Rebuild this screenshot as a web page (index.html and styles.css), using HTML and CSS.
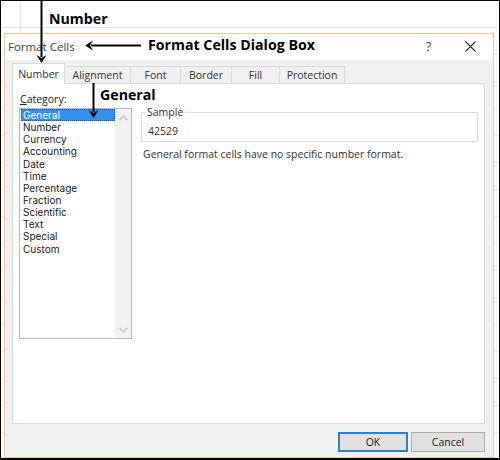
FILE: index.html
```html
<!DOCTYPE html>
<html>
<head>
<meta charset="utf-8">
<link rel="stylesheet" href="styles.css">
</head>
<body>
<div class="frame">
  <div class="dialog">
    <div class="titlebar">
      <span class="title">Format Cells</span>
      <span class="help">?</span>
      <span class="close">
        <svg width="11" height="11" viewBox="0 0 11 11"><path d="M0.5 0.5 L10.5 10.5 M10.5 0.5 L0.5 10.5" stroke="#333" stroke-width="1.1" fill="none"/></svg>
      </span>
    </div>
    <div class="body">
      <div class="tabs">
        <div class="tab active">Number</div>
        <div class="tab t-align">Alignment</div>
        <div class="tab t-font">Font</div>
        <div class="tab t-border">Border</div>
        <div class="tab t-fill">Fill</div>
        <div class="tab t-prot">Protection</div>
      </div>
      <div class="panel">
        <div class="cat-col">
          <div class="cat-label"><u>C</u>ategory:</div>
          <div class="listbox">
            <ul class="items">
              <li class="sel">General</li>
              <li>Number</li>
              <li>Currency</li>
              <li>Accounting</li>
              <li>Date</li>
              <li>Time</li>
              <li>Percentage</li>
              <li>Fraction</li>
              <li>Scientific</li>
              <li>Text</li>
              <li>Special</li>
              <li>Custom</li>
            </ul>
            <div class="scrollbar">
              <svg width="9" height="6" viewBox="0 0 9 6"><path d="M0.5 5 L4.5 1 L8.5 5" stroke="#c2c2c2" stroke-width="1.2" fill="none"/></svg>
              <svg width="9" height="6" viewBox="0 0 9 6"><path d="M0.5 1 L4.5 5 L8.5 1" stroke="#c2c2c2" stroke-width="1.2" fill="none"/></svg>
            </div>
          </div>
        </div>
        <div class="right-col">
          <fieldset class="sample">
            <legend>Sample</legend>
            <div class="sample-val">42529</div>
          </fieldset>
          <div class="desc">General format cells have no specific number format.</div>
        </div>
      </div>
      <div class="buttons">
        <button class="btn ok">OK</button>
        <button class="btn cancel">Cancel</button>
      </div>
    </div>
  </div>

  <svg class="arrows" width="500" height="460" viewBox="0 0 500 460">
    <g fill="#000" stroke="#000">
      <line x1="41.5" y1="0" x2="41.5" y2="57" stroke-width="2"/>
      <path d="M36.5 55 L41.5 63 L46.5 55 L41.5 58 Z" stroke="none"/>
      <line x1="91" y1="45.5" x2="141" y2="45.5" stroke-width="2"/>
      <path d="M93 40.5 L85 45.5 L93 50.5 L90 45.5 Z" stroke="none"/>
      <line x1="93.5" y1="80" x2="93.5" y2="112" stroke-width="2"/>
      <path d="M88.5 110 L93.5 118 L98.5 110 L93.5 113 Z" stroke="none"/>
    </g>
  </svg>
  <div class="note n-number">Number</div>
  <div class="note n-dialog">Format Cells Dialog Box</div>
  <div class="note n-general">General</div>
</div>
</body>
</html>
```

FILE: styles.css
```css
html, body {
  margin: 0;
  padding: 0;
  background: #fff;
}

.frame {
  position: relative;
  width: 500px;
  height: 460px;
  box-sizing: border-box;
  border: 1px solid #000;
  border-bottom-width: 2px;
  overflow: hidden;
  background-color: #fff;
  background-image:
    repeating-linear-gradient(to bottom, transparent 0, transparent 26px, #e4e4e4 26px, #e4e4e4 27px, transparent 27px, transparent 27px),
    linear-gradient(to right, transparent 19px, #e4e4e4 19px, #e4e4e4 20px, transparent 20px);
  font-family: "Open Sans", "Noto Sans", sans-serif;
}

.dialog {
  margin-left: 3px;
  margin-top: 32px;
  width: 490px;
  height: 425px;
  box-sizing: border-box;
  border: 1px solid #e6cfa6;
  background: #f0f0f0;
  display: flex;
  flex-direction: column;
}

.titlebar {
  height: 26px;
  background: #fff;
  display: flex;
  align-items: center;
  padding-left: 3px;
  color: #444;
  font-size: 11.5px;
}

.title {
  flex: 1;
  margin-top: -2px;
}

.help {
  width: 12px;
  margin-right: 27px;
  font-size: 12px;
  color: #333;
  margin-top: -2px;
}

.close {
  width: 11px;
  height: 11px;
  margin-right: 17px;
  display: flex;
  margin-top: -2px;
}

.body {
  flex: 1;
  display: flex;
  flex-direction: column;
  padding: 3px 8px 0 7px;
}

.tabs {
  display: flex;
  align-items: flex-end;
  height: 20px;
  font-size: 10.5px;
  color: #333;
  position: relative;
  z-index: 1;
}

.tab {
  height: 17px;
  box-sizing: border-box;
  border: 1px solid #dadada;
  border-bottom: none;
  border-left: none;
  background: #f0f0f0;
  display: flex;
  align-items: center;
  justify-content: center;
}

.tab.active {
  height: 21px;
  margin-bottom: -1px;
  background: #fff;
  border-left: 1px solid #dadada;
  width: 53px;
}

.t-align { width: 66px; }
.t-font { width: 50px; }
.t-border { width: 51px; }
.t-fill { width: 48px; }
.t-prot { width: 65px; }

.panel {
  height: 341px;
  box-sizing: border-box;
  background: #fff;
  border: 1px solid #dadada;
  display: flex;
  padding: 9px 0 0 6px;
  color: #222;
}

.cat-col {
  width: 113px;
  display: flex;
  flex-direction: column;
}

.cat-label {
  font-size: 10.5px;
  margin-left: 1px;
  height: 15px;
  line-height: 13px;
  color: #222;
}

.listbox {
  width: 113px;
  height: 231px;
  box-sizing: border-box;
  border: 1px solid #b9b9b9;
  display: flex;
}

.items {
  list-style: none;
  margin: 0;
  padding: 0 0 0 1px;
  flex: 1;
  font-family: "Inter", "Open Sans", sans-serif;
  font-size: 10px;
}

.items li {
  height: 12.15px;
  line-height: 12.15px;
  padding-left: 2px;
  white-space: nowrap;
  color: #222;
}

.items li.sel {
  background: #3390f0;
  color: #fff;
  outline: 1px dotted #1c5fa8;
  outline-offset: -1px;
}

.scrollbar {
  width: 16px;
  background: #f2f2f2;
  display: flex;
  flex-direction: column;
  justify-content: space-between;
  align-items: center;
  padding: 6px 0 5px;
  box-sizing: border-box;
}

.right-col {
  flex: 1;
  display: flex;
  flex-direction: column;
  padding-left: 9px;
  padding-right: 6px;
}

.sample {
  margin: 13px 0 0 0;
  padding: 0 6px 0 6px;
  border: 1px solid #dcdcdc;
  height: 36px;
  box-sizing: border-box;
  min-width: 0;
}

.sample legend {
  font-size: 10.5px;
  padding: 0 1px;
  margin-left: -2px;
  line-height: 12px;
  height: 12px;
  color: #333;
}

.sample-val {
  font-size: 10.5px;
  line-height: 12px;
  margin-top: 7px;
  color: #333;
}

.desc {
  font-size: 10.5px;
  margin-top: 5px;
  margin-left: 2px;
  color: #333;
  white-space: nowrap;
}

.buttons {
  display: flex;
  justify-content: flex-end;
  gap: 3px;
  padding-top: 8px;
}

.btn {
  height: 20px;
  box-sizing: border-box;
  font-family: "Open Sans", "Noto Sans", sans-serif;
  font-size: 10.5px;
  color: #222;
  background: #e1e1e1;
  border: 1px solid #adadad;
  padding: 0;
  line-height: 16px;
}

.btn.ok {
  width: 70px;
  border: 2px solid #2f7fd0;
}

.btn.cancel {
  width: 74px;
}

.arrows {
  position: absolute;
  left: -1px;
  top: -1px;
  pointer-events: none;
}

.note {
  position: absolute;
  font-family: "Open Sans", "Noto Sans", sans-serif;
  font-weight: 700;
  font-size: 14.2px;
  color: #000;
  white-space: nowrap;
  line-height: 18px;
}

.n-number { left: 48px; top: 9px; }
.n-dialog { left: 147px; top: 35px; }
.n-general { left: 99px; top: 85px; }
```
